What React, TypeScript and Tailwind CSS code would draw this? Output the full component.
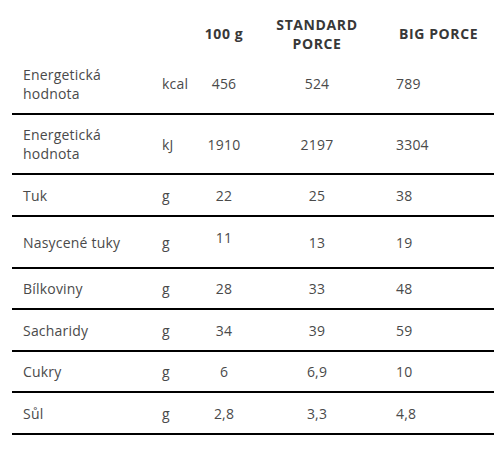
import React from "react";

type Row = { name: string[]; unit: string; a: string; b: string; c: string; h: string; shiftA?: boolean };

const rows: Row[] = [
  { name: ["Energetická", "hodnota"], unit: "kcal", a: "456", b: "524", c: "789", h: "h-[61px]" },
  { name: ["Energetická", "hodnota"], unit: "kJ", a: "1910", b: "2197", c: "3304", h: "h-[60px]" },
  { name: ["Tuk"], unit: "g", a: "22", b: "25", c: "38", h: "h-[42px]" },
  { name: ["Nasycené tuky"], unit: "g", a: "11", b: "13", c: "19", h: "h-[52px]", shiftA: true },
  { name: ["Bílkoviny"], unit: "g", a: "28", b: "33", c: "48", h: "h-[41px]" },
  { name: ["Sacharidy"], unit: "g", a: "34", b: "39", c: "59", h: "h-[42px]" },
  { name: ["Cukry"], unit: "g", a: "6", b: "6,9", c: "10", h: "h-[41px]" },
  { name: ["Sůl"], unit: "g", a: "2,8", b: "3,3", c: "4,8", h: "h-[42px]" },
];

const cols = "grid grid-cols-[150px_33px_58px_128px_113px]";

export default function App() {
  return (
    <div
      className="w-[503px] h-[451px] bg-white pl-[12px] pt-[13px]"
      style={{ fontFamily: '"Open Sans", "Liberation Sans", sans-serif' }}
    >
      <div className="w-[482px]">
        <div className={`${cols} h-[41px] items-center text-[14px] leading-[19px] font-bold tracking-[0.6px] text-[#383838]`}>
          <div />
          <div />
          <div className="text-center">100 g</div>
          <div className="text-center">
            STANDARD
            <br />
            PORCE
          </div>
          <div className="pl-[18px]">BIG PORCE</div>
        </div>
        {rows.map((r, i) => (
          <div
            key={i}
            className={`${cols} ${r.h} items-center border-b-2 border-black text-[14px] leading-[19px] tracking-[0.2px] text-[#4a4a4a]`}
          >
            <div className="pl-[11px]">
              {r.name.map((n, j) => (
                <div key={j}>{n}</div>
              ))}
            </div>
            <div>{r.unit}</div>
            <div className={`text-center ${r.shiftA ? "-translate-y-[5px]" : ""}`}>{r.a}</div>
            <div className="text-center">{r.b}</div>
            <div className="pl-[15px]">{r.c}</div>
          </div>
        ))}
      </div>
    </div>
  );
}
